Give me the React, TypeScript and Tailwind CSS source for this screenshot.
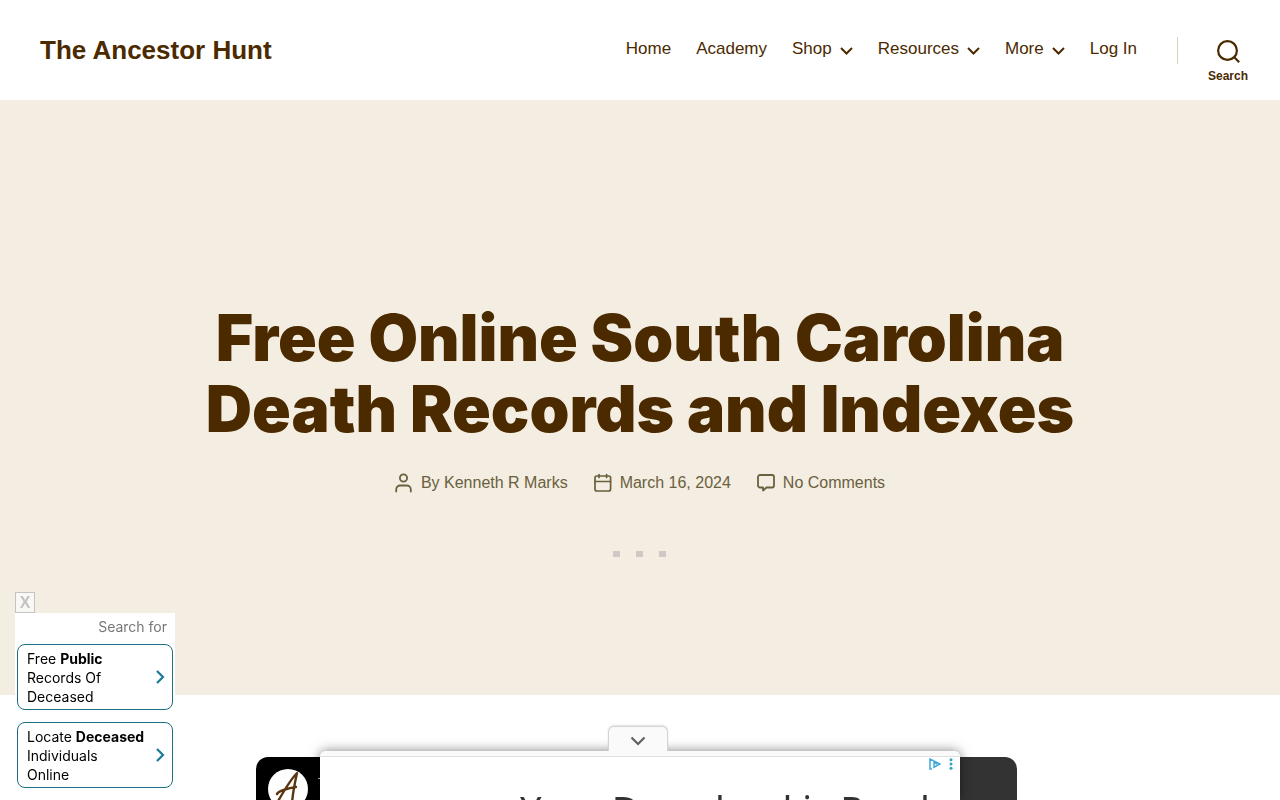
import React from "react";

const navItems = [
  { label: "Home", hasMenu: false },
  { label: "Academy", hasMenu: false },
  { label: "Shop", hasMenu: true },
  { label: "Resources", hasMenu: true },
  { label: "More", hasMenu: true },
  { label: "Log In", hasMenu: false },
];

const searchLinks = [
  { before: "Free", strong: "Public", lines: ["Records Of", "Deceased"] },
  { before: "Locate", strong: "Deceased", lines: ["Individuals", "Online"] },
];

const Header = () => (
  <header className="flex h-[100px] items-start justify-between bg-white pl-10">
    <a href="#" className="pt-8 text-[26px] leading-9 font-bold">
      The Ancestor Hunt
    </a>
    <div className="flex items-start">
      <nav className="pt-9">
        <ul className="flex gap-[25px] text-[17px] leading-[26px]">
          {navItems.map((item) => (
            <li key={item.label}>
              <a href="#" className="flex items-center gap-2">
                {item.label}
                {item.hasMenu && (
                  <svg
                    viewBox="0 0 13 8"
                    className="mt-1 h-2 w-[13px]"
                    fill="none"
                    stroke="currentColor"
                    strokeWidth="2"
                  >
                    <path d="M1 1l5.5 5.5L12 1" />
                  </svg>
                )}
              </a>
            </li>
          ))}
        </ul>
      </nav>
      <div className="mt-[37px] ml-10 h-[27px] w-px bg-[#d8cfc0]" />
      <button
        type="button"
        className="mt-10 flex w-[102px] flex-col items-center gap-1 pr-0.5 text-xs leading-[18px] font-bold"
      >
        <svg
          viewBox="0 0 23 23"
          className="h-[23px] w-[23px]"
          fill="none"
          stroke="currentColor"
          strokeWidth="2.2"
        >
          <circle cx="10.5" cy="10.5" r="9.4" />
          <path d="M16.8 16.8l5.4 5.4" />
        </svg>
        Search
      </button>
    </div>
  </header>
);

const Hero = () => (
  <section className="flex flex-col items-center bg-[#f4ede1] px-10 pt-[202px] pb-[138px]">
    <h1 className="text-center font-[Inter,sans-serif] text-[64px] leading-[71px] font-black">
      Free Online South Carolina
      <br />
      Death Records and Indexes
    </h1>
    <ul className="mt-[27px] flex gap-[26px] text-base leading-6 text-[#69603e]">
      <li className="flex items-center gap-2">
        <svg
          viewBox="0 0 18 20"
          className="h-5 w-[18px]"
          fill="none"
          stroke="currentColor"
          strokeWidth="1.8"
          strokeLinecap="round"
        >
          <circle cx="8.5" cy="5" r="3.6" />
          <path d="M1.2 18.5v-2a4 4 0 0 1 4-4h6.6a4 4 0 0 1 4 4v2" />
        </svg>
        <a href="#">By Kenneth R Marks</a>
      </li>
      <li className="flex items-center gap-2">
        <svg
          viewBox="0 0 18 20"
          className="h-5 w-[18px]"
          fill="none"
          stroke="currentColor"
          strokeWidth="1.7"
          strokeLinecap="round"
        >
          <rect x="1" y="3" width="15.6" height="15" rx="2" />
          <path d="M1 8.5h15.6M5 1.5v3M12.6 1.5v3" />
        </svg>
        <a href="#">March 16, 2024</a>
      </li>
      <li className="flex items-center gap-2">
        <svg
          viewBox="0 0 18 20"
          className="h-5 w-[18px]"
          fill="none"
          stroke="currentColor"
          strokeWidth="1.8"
          strokeLinejoin="round"
        >
          <path d="M3 2h12a2 2 0 0 1 2 2v8.5a2 2 0 0 1-2 2H9.500L6 17.5v-3H3a2 2 0 0 1-2-2V4a2 2 0 0 1 2-2z" />
        </svg>
        <a href="#">No Comments</a>
      </li>
    </ul>
    <div className="mt-14 flex gap-4 pr-0.5">
      <span className="h-1.5 w-[7px] bg-[#d1c8c6]" />
      <span className="h-1.5 w-[7px] bg-[#d1c8c6]" />
      <span className="h-1.5 w-[7px] bg-[#d1c8c6]" />
    </div>
  </section>
);

const FeaturedBanner = () => (
  <div className="mx-auto mt-[62px] max-w-3xl pr-[7px]">
    <div className="flex h-48 rounded-t-xl bg-gradient-to-r from-black from-50% to-[#333] to-50% px-3 pt-3 text-white">
      <svg viewBox="0 0 40 40" className="h-10 w-10">
        <circle cx="20" cy="20" r="20" fill="#fff" />
        <path
          d="M9 34C13 27 22 11 29 4c-2 9-4 18-5 30M9 25c1-3 12-6 19-7"
          fill="none"
          stroke="#5a3510"
          strokeWidth="2.4"
          strokeLinecap="round"
          strokeLinejoin="round"
        />
      </svg>
      <span className="mt-[9px] ml-2.5 h-px w-5 bg-[#ccc]" />
    </div>
  </div>
);

const SearchAd = () => (
  <aside className="fixed top-[592px] left-[15px] w-40 font-[Inter,'Noto_Sans',sans-serif] text-sm leading-[19px] text-black">
    <button
      type="button"
      aria-label="Close ad"
      className="flex h-[21px] w-5 items-center justify-center border border-[#c4c4c4] bg-[#faf8f4] font-['Liberation_Sans',sans-serif] text-base font-bold text-[#c2c2c2]"
    >
      X
    </button>
    <div className="flex h-[200px] flex-col gap-3 bg-white px-0.5">
      <p className="-mb-3 h-[31px] pt-1 pr-1.5 text-right text-[#777]">Search for</p>
      {searchLinks.map((link) => (
        <a
          key={link.strong}
          href="#"
          className="flex h-[66px] shrink-0 items-center justify-between rounded-lg border border-[#1b7086] pr-[7px] pl-[9px]"
        >
          <span className="whitespace-nowrap">
            {link.before} <b>{link.strong}</b>
            <br />
            {link.lines[0]}
            <br />
            {link.lines[1]}
          </span>
          <svg
            viewBox="0 0 9 14"
            className="h-3.5 w-[9px]"
            fill="none"
            stroke="#1b7b96"
            strokeWidth="2.2"
          >
            <path d="M1 1l6 6-6 6" />
          </svg>
        </a>
      ))}
    </div>
  </aside>
);

const AnchorAd = () => (
  <aside className="fixed inset-x-0 bottom-0 mx-auto flex w-[640px] flex-col items-center">
    <button
      type="button"
      aria-label="Hide ad"
      className="z-10 mr-1 flex h-[25px] w-[60px] items-center justify-center rounded-t-md border border-b-0 border-[#d4d4d4] bg-[#fafafa] pt-1 shadow-[0_-1px_2px_rgba(0,0,0,0.12)]"
    >
      <svg
        viewBox="0 0 16 10"
        className="h-2.5 w-4"
        fill="none"
        stroke="#616161"
        strokeWidth="2.2"
      >
        <path d="M1.5 1.5L8 8l6.5-6.5" />
      </svg>
    </button>
    <div className="h-[49px] w-full overflow-hidden rounded-t-md bg-white shadow-[0_0_12px_rgba(0,0,0,0.5)]">
      <div className="h-1.5 border-b border-[#e0e0e0] bg-[#fafafa]" />
      <div className="flex h-3.5 items-center justify-end gap-2 pr-[7px]">
        <svg viewBox="0 0 12 12" className="h-3 w-3" fill="none" stroke="#3fa9d6" strokeWidth="1.5">
          <path d="M3 11H1V1l10 5-6 3.2V4.200l3 1.800" />
        </svg>
        <svg viewBox="0 0 4 12" className="h-3 w-1" fill="#2aa5c0">
          <circle cx="2" cy="1.8" r="1.5" />
          <circle cx="2" cy="6" r="1.5" />
          <circle cx="2" cy="10.2" r="1.5" />
        </svg>
      </div>
      <p className="pt-3 pl-[200px] font-['Noto_Sans',sans-serif] text-[38px] leading-[52px] whitespace-nowrap text-[#333]">
        Your Download is Ready
      </p>
    </div>
  </aside>
);

export default function App() {
  return (
    <div className="h-screen overflow-hidden bg-white font-['Liberation_Sans',sans-serif] text-[#4b2a00]">
      <Header />
      <main>
        <Hero />
        <FeaturedBanner />
      </main>
      <SearchAd />
      <AnchorAd />
    </div>
  );
}
